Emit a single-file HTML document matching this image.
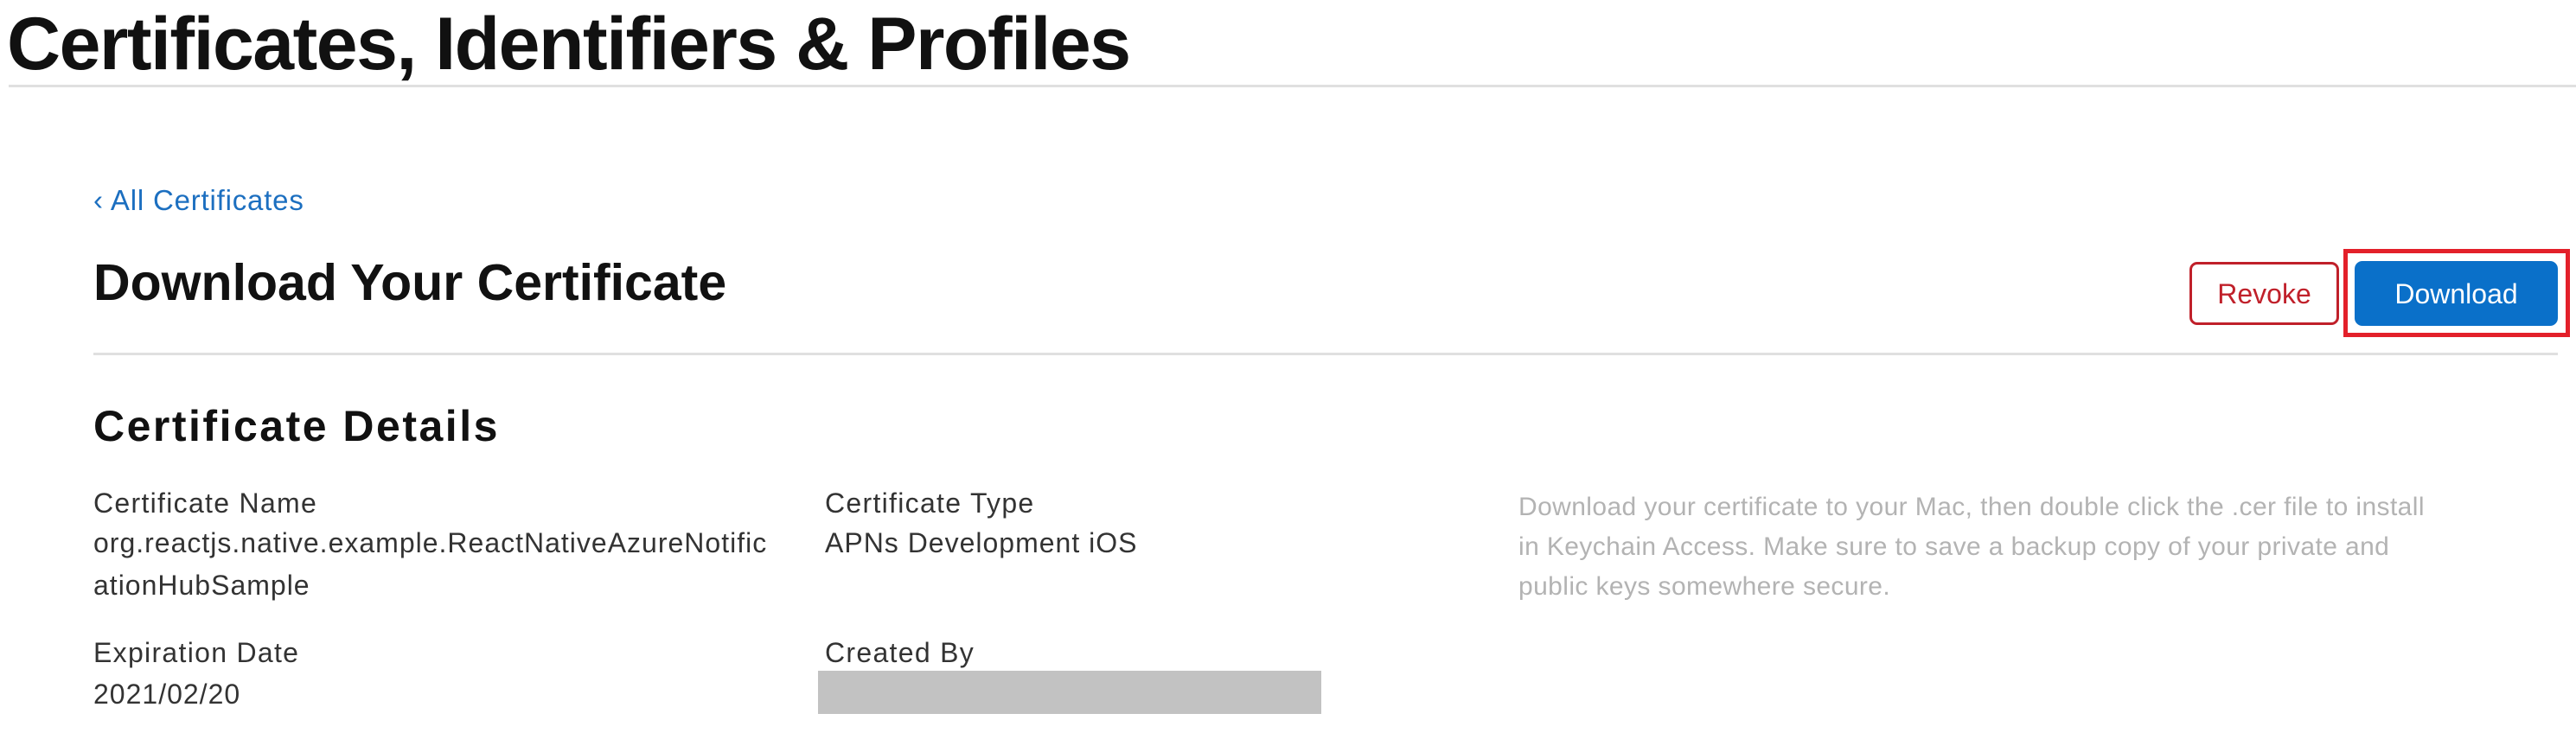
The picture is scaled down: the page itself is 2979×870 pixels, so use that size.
<!DOCTYPE html>
<html><head><meta charset="utf-8"><style>
*{margin:0;padding:0;box-sizing:border-box}
body{width:2979px;height:870px;background:#fff;position:relative;overflow:hidden;font-family:"Liberation Sans",sans-serif;color:#1d1d1f}
.a{position:absolute;white-space:nowrap;line-height:1}
.lbl{font-size:32px;color:#333;letter-spacing:1.3px}
.val{font-size:32px;color:#333;letter-spacing:1px}
</style></head><body>
<div class="a" style="left:8px;top:8px;font-size:86px;font-weight:bold;color:#111;letter-spacing:-1.5px">Certificates, Identifiers &amp; Profiles</div>
<div class="a" style="left:10px;top:98px;width:2969px;height:3px;background:#e0e0e0"></div>
<div class="a" style="left:108px;top:215px;font-size:33px;color:#1c6fc0;letter-spacing:0.8px">‹ All Certificates</div>
<div class="a" style="left:108px;top:298px;font-size:59px;font-weight:bold;color:#111">Download Your Certificate</div>
<div class="a" style="left:2532px;top:303px;width:173px;height:73px;border:3px solid #c0202a;border-radius:9px;color:#c0202a;font-size:32px;display:flex;align-items:center;justify-content:center">Revoke</div>
<div class="a" style="left:2710px;top:288px;width:262px;height:102px;border:5px solid #e3202a"></div>
<div class="a" style="left:2723px;top:302px;width:235px;height:75px;background:#0a70c9;border-radius:9px;color:#fff;font-size:32px;display:flex;align-items:center;justify-content:center">Download</div>
<div class="a" style="left:108px;top:408px;width:2850px;height:3px;background:#e0e0e0"></div>
<div class="a" style="left:108px;top:468px;font-size:50px;font-weight:bold;color:#111;letter-spacing:2.5px">Certificate Details</div>
<div class="a lbl" style="left:108px;top:566px">Certificate Name</div>
<div class="a val" style="left:108px;top:612px">org.reactjs.native.example.ReactNativeAzureNotific</div>
<div class="a val" style="left:108px;top:661px">ationHubSample</div>
<div class="a lbl" style="left:108px;top:739px">Expiration Date</div>
<div class="a val" style="left:108px;top:787px">2021/02/20</div>
<div class="a lbl" style="left:954px;top:566px">Certificate Type</div>
<div class="a val" style="left:954px;top:612px">APNs Development iOS</div>
<div class="a lbl" style="left:954px;top:739px">Created By</div>
<div class="a" style="left:946px;top:776px;width:582px;height:50px;background:#c2c2c2"></div>
<div class="a" style="left:1756px;top:564px;font-size:30px;line-height:46px;color:#b3b3b3;white-space:normal;width:1200px;letter-spacing:0.4px">Download your certificate to your Mac, then double click the .cer file to install<br>in Keychain Access. Make sure to save a backup copy of your private and<br>public keys somewhere secure.</div>
</body></html>
